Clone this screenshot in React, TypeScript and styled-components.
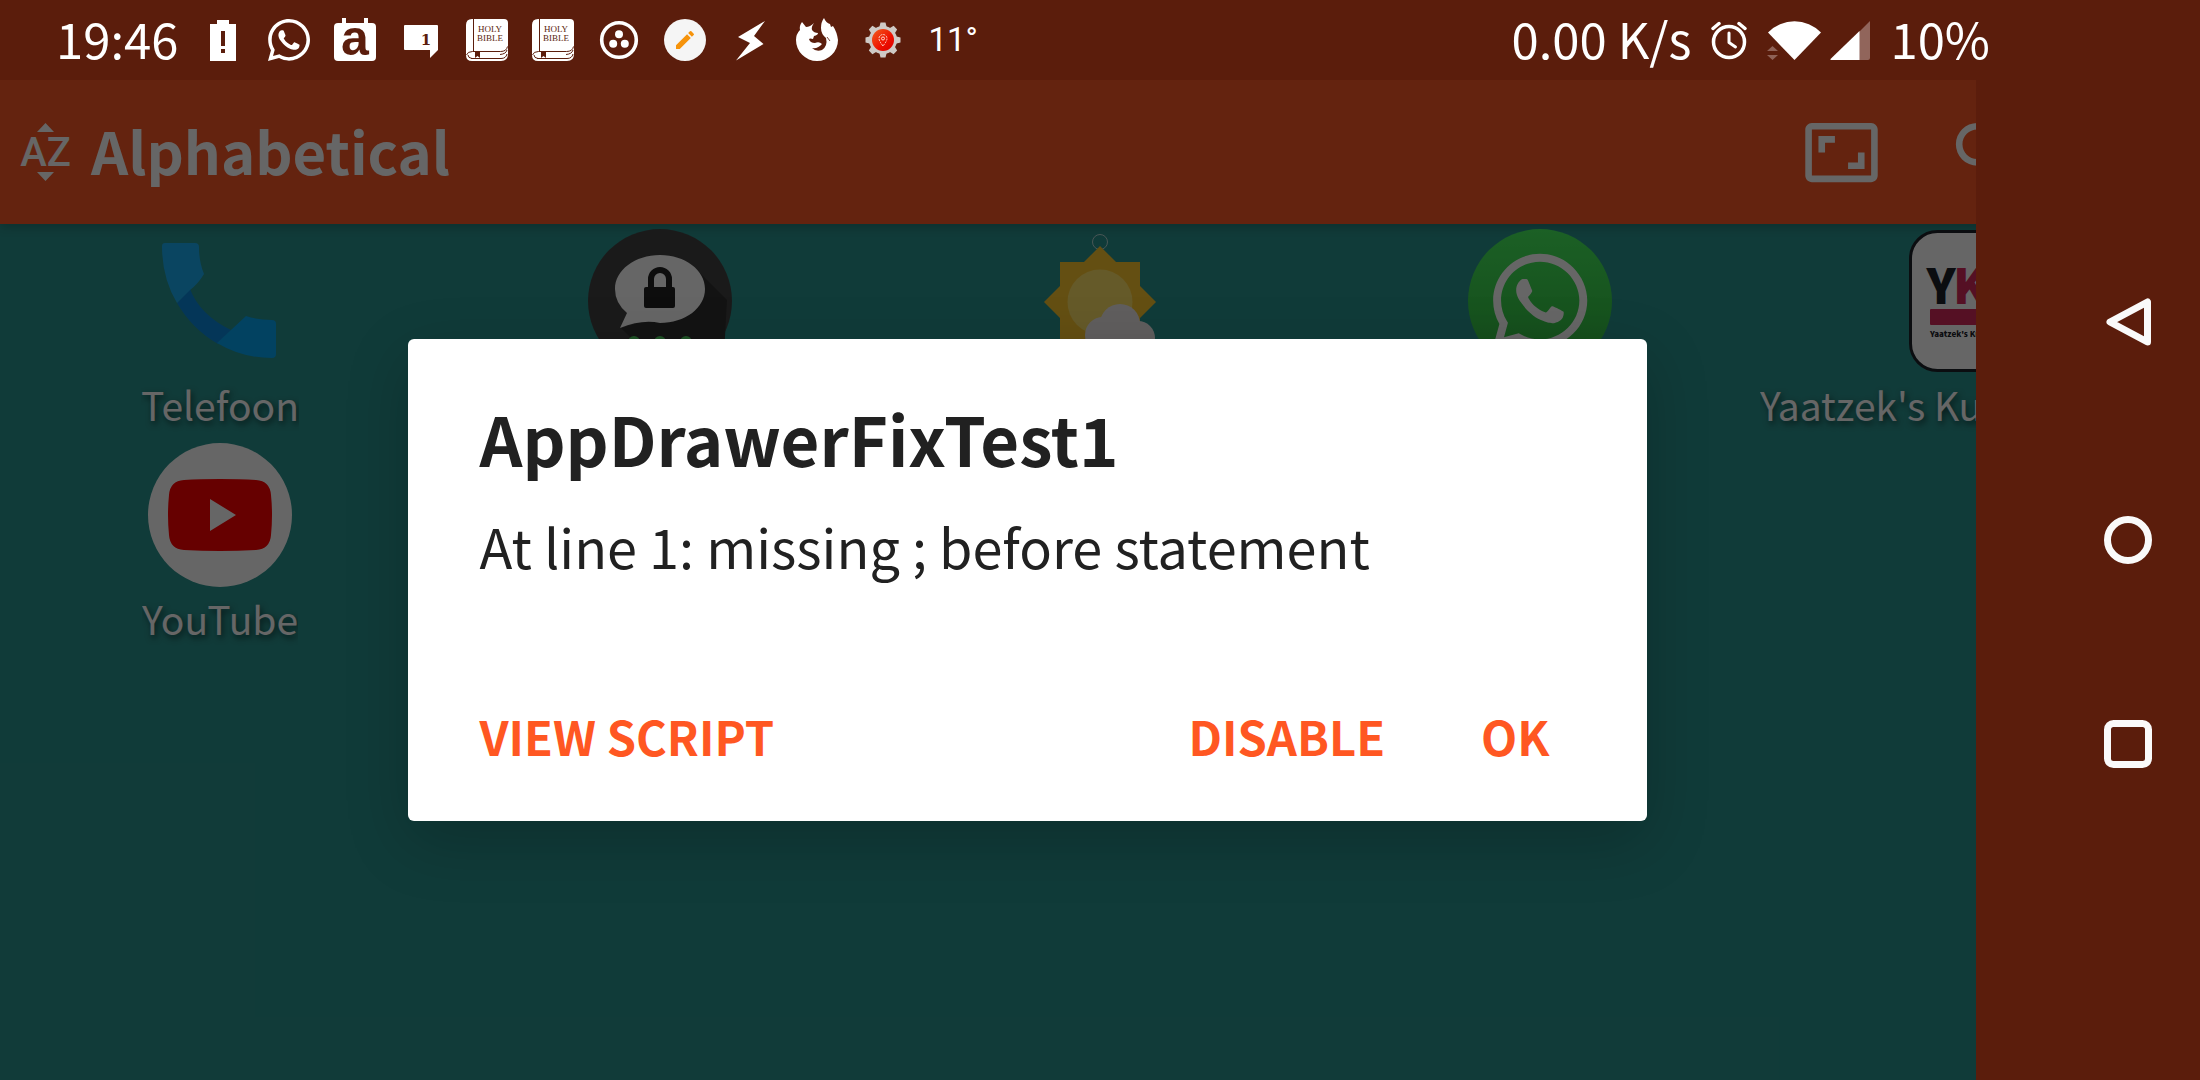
import React from "react";
import styled, { createGlobalStyle } from "styled-components";
import { FaWhatsapp } from "react-icons/fa";
import { MdAspectRatio, MdEdit, MdSearch } from "react-icons/md";

const sans = `"Noto Sans CJK JP", "Noto Sans", sans-serif`;
const frame = "#5b1d0c";

const GlobalStyle = createGlobalStyle`
  * { box-sizing: border-box; }
  body { margin: 0; background: ${frame}; font-family: ${sans}; overflow: hidden; }
  h1, h2, p { margin: 0; }
  button {
    margin: 0;
    padding: 0;
    border: 0;
    background: none;
    color: inherit;
    font: inherit;
    cursor: pointer;
  }
  svg { display: block; flex: none; }
`;

/* ---------- Layout ---------- */

const Screen = styled.div`
  display: grid;
  grid-template-rows: 80px 1fr;
  height: 100vh;
`;

const StatusBar = styled.header`
  display: flex;
  align-items: center;
  justify-content: space-between;
  padding: 0 210px 0 56px;
  background: ${frame};
  color: #fff;
`;

const StatusGroup = styled.div<{ $gap: number }>`
  display: flex;
  align-items: center;
  gap: ${(p) => p.$gap}px;
`;

const StatusText = styled.span`
  padding-bottom: 4px;
  font-size: 49px;
  line-height: 60px;
  white-space: nowrap;
`;

const Temperature = styled.span`
  font-family: Roboto, sans-serif;
  font-size: 33px;
  line-height: 40px;
`;

const StatusIcon = styled.svg.attrs({ viewBox: "0 0 42 42", "aria-hidden": true })`
  width: 42px;
  height: 42px;
  overflow: visible;
  fill: #fff;
`;

/* Launcher, scrim with dialog and navigation bar are layers in the same cell. */
const Stage = styled.div`
  display: grid;
  grid-template: minmax(0, 1fr) / minmax(0, 1fr);
  min-height: 0;
  overflow: hidden;
  > * { grid-area: 1 / 1; }
`;

const Launcher = styled.main`
  display: flex;
  flex-direction: column;
  background: #2a938e;
  color: #fff;
`;

const AppBar = styled.div`
  display: flex;
  align-items: center;
  gap: 21px;
  height: 144px;
  flex: none;
  padding: 0 175px 0 21px;
  background: #fb5926;
  box-shadow: 0 3px 10px rgba(0, 0, 0, 0.2);
`;

const BarTitle = styled.h1`
  flex: 1;
  padding-bottom: 4px;
  font-size: 58px;
  font-weight: 700;
  line-height: 70px;
`;

const BarActions = styled.div`
  display: flex;
  gap: 65px;
`;

const SortIcon = styled.svg`
  fill: #fff;
  overflow: visible;
  font-family: Roboto, sans-serif;
  font-size: 40px;
  font-weight: 500;
`;

const AppGrid = styled.div`
  display: grid;
  grid-template-columns: repeat(5, minmax(0, 1fr));
  row-gap: 8px;
  padding-top: 5px;
`;

const AppTile = styled.button`
  display: flex;
  flex-direction: column;
  align-items: center;
  justify-content: flex-start;
  min-width: 0;
`;

const AppIcon = styled.svg.attrs({ viewBox: "0 0 144 144", "aria-hidden": true })`
  width: 144px;
  height: 144px;
`;

const AppLabel = styled.span`
  max-width: 100%;
  overflow: hidden;
  font-size: 39px;
  line-height: 62px;
  white-space: nowrap;
  text-overflow: ellipsis;
  text-shadow: 2px 3px 6px rgba(0, 0, 0, 0.6);
`;

const Scrim = styled.div`
  display: flex;
  align-items: center;
  justify-content: center;
  padding-right: 146px;
  background: rgba(0, 0, 0, 0.6);
`;

const Dialog = styled.section`
  width: 100%;
  max-width: 1239px;
  padding: 59px 97px 55px 72px;
  border-radius: 6px;
  background: #fff;
  color: #212121;
  box-shadow: 0 20px 64px rgba(0, 0, 0, 0.2);
`;

const DialogTitle = styled.h2`
  font-size: 67px;
  font-weight: 700;
  line-height: 80px;
`;

const DialogMessage = styled.p`
  margin-top: 38px;
  font-size: 54px;
  line-height: 60px;
`;

const DialogActions = styled.div`
  display: flex;
  gap: 96px;
  margin-top: 130px;
`;

const DialogButton = styled.button<{ $lead?: boolean }>`
  margin-right: ${(p) => (p.$lead ? "auto" : "0")};
  color: #ff5722;
  font-size: 47px;
  font-weight: 700;
  line-height: 60px;
`;

const NavBar = styled.nav`
  display: grid;
  grid-template-rows: 232px 204px 204px;
  align-content: start;
  align-items: center;
  justify-content: end;
  justify-self: end;
  width: 224px;
  padding: 126px 48px 0 0;
  background: ${frame};
`;

const NavIcon = styled.svg.attrs({ viewBox: "0 0 48 48", "aria-hidden": true })`
  width: 48px;
  height: 48px;
  fill: none;
  stroke: #fafafa;
  stroke-width: 7;
  stroke-linejoin: round;
`;

/* ---------- Status icons ---------- */

const BatteryAlert = () => (
  <StatusIcon>
    <path d="M15 1h12v4h7v37H8V5h7z" />
    <path d="M19 12h4v15h-4zM19 30h4v4h-4z" fill={frame} />
  </StatusIcon>
);

const CalendarLetter = () => (
  <StatusIcon>
    <path d="M8-1h4v6H8zM30-1h4v6h-4z" />
    <rect y="4" width="42" height="38" rx="4" />
    <text x="21" y="36" textAnchor="middle" fontFamily="Liberation Sans, sans-serif" fontWeight="700" fontSize="50" fill={frame}>a</text>
  </StatusIcon>
);

const ChatCount = () => (
  <StatusIcon>
    <path d="M5 6h32q1 0 1 1v24l-8 8v-8H5q-1 0-1-1V7q0-1 1-1z" />
    <text x="26" y="26" textAnchor="middle" fontFamily="DejaVu Serif, serif" fontWeight="700" fontSize="15" fill={frame}>1</text>
  </StatusIcon>
);

const HolyBible = () => (
  <StatusIcon>
    <path d="M6 0h32q4 0 4 4v31q0 7-7 7H6q-6 0-6-6V6q0-6 6-6z" />
    <path d="M7.500 0v32M0.500 36q1-3.500 6-3.500h28q6 0 7-5M41 31q-1 4-7 4.500M5 39.500h30q5 0 6-4.500M2 36q0 3 4 3.500" fill="none" stroke={frame} strokeWidth="1" />
    <path d="M9 33h5v6l-2.500-2L9 39z" fill={frame} />
    <g fontFamily="Liberation Serif, serif" fontSize="9" fill={frame} textAnchor="middle">
      <text x="24" y="13">HOLY</text>
      <text x="24" y="22">BIBLE</text>
    </g>
  </StatusIcon>
);

const ThreeDots = () => (
  <StatusIcon>
    <circle cx="21" cy="21" r="17.300" fill="none" stroke="#fff" strokeWidth="3.600" />
    <circle cx="21" cy="15.300" r="4" />
    <circle cx="15.200" cy="24.800" r="4" />
    <circle cx="26.800" cy="24.800" r="4" />
  </StatusIcon>
);

const PencilDisc = () => (
  <StatusIcon>
    <circle cx="21" cy="21" r="21" fill="#f5f5f5" />
    <MdEdit x={9} y={9} size={24} color="#f6930b" />
  </StatusIcon>
);

const Bolt = () => (
  <StatusIcon>
    <path d="M35 2 8 18l12 6L6 41.500 33.500 25 24 17z" />
  </StatusIcon>
);

const Firefox = () => (
  <StatusIcon>
    <path d="M6 3l4 5q4 0 8-4-3 4-2 7 2 3 6 3 0 2-4 3l-1 3q-3-1-4 0 1 4 6 4 4-2 7 1-4 5-10 4 4 4 10 2 6-4 4-12-5-4-5-10 0-6 3-10 2 5 6 6l1 3 2-1q4 6 5 14A21 21 0 0 1 0 21q0-6 4-10-1-4 2-8z" />
    <path d="M31 18l3 4" stroke={frame} strokeWidth="0.800" />
  </StatusIcon>
);

const GearPin = () => (
  <StatusIcon>
    <defs>
      <linearGradient id="gear-disc" x1="0" y1="0" x2="1" y2="1">
        <stop offset="0" stopColor="#f2601f" />
        <stop offset="0.600" stopColor="#ee1000" />
        <stop offset="1" stopColor="#d80000" />
      </linearGradient>
    </defs>
    <g fill="#cfcac6">
      <circle cx="21" cy="21" r="14" />
      {[0, 45, 90, 135].map((angle) => (
        <path key={angle} d="M18.500 3.500h5l1.500 6v23l-1.500 6h-5l-1.500-6v-23z" transform={`rotate(${angle} 21 21)`} />
      ))}
    </g>
    <circle cx="21" cy="21" r="11" fill="url(#gear-disc)" />
    <path d="M21 27q-4-5-4-7.500a4 4 0 0 1 8 0Q25 22 21 27z" fill="none" stroke="#ffd9d0" strokeWidth="1" strokeDasharray="2 1" />
    <circle cx="21" cy="19.500" r="1.500" fill="none" stroke="#ffd9d0" />
  </StatusIcon>
);

const Alarm = () => (
  <svg width="36" height="39" viewBox="0 0 36 39" fill="none" stroke="#fff" strokeLinecap="round" strokeLinejoin="round" aria-hidden="true">
    <circle cx="18" cy="21" r="15.500" strokeWidth="3.500" />
    <path d="M2 7.500 8 2.500M34 7.500l-6-5" strokeWidth="3.500" />
    <path d="M18 12v9.500l6.500 4.500" strokeWidth="3" />
  </svg>
);

const Wifi = () => (
  <svg width="54" height="39" viewBox="0 0 54 39" aria-hidden="true">
    <path d="M1 11.500a37 37 0 0 1 53 0L27.500 39z" fill="#fff" />
    <path d="M0 30h11l-5.500-5zM0 34h11l-5.500 5z" fill="#8f6257" />
  </svg>
);

const Signal = () => (
  <svg width="40" height="39" viewBox="0 0 40 39" aria-hidden="true">
    <path d="M40 0v37q0 2-2 2h-9V11z" fill="#91655b" />
    <path d="M29.500 10v29H1q-1 0-.5-1z" fill="#fff" />
  </svg>
);

/* ---------- Launcher icons ---------- */

const PhoneIcon = () => (
  <AppIcon>
    <path d="M42 60q10 26 41 41l-13 14Q44 100 29 74z" fill="#0c88dc" />
    <path d="M17 14h30q4 0 4 4 0 15 5 27-6 10-14 16L29 74Q14 49 14 17q0-3 3-3z" fill="#1badf3" />
    <path d="M98 87q12 4 26 4 4 0 4 4v30q0 4-4 4-30 0-55-15z" fill="#06a5f2" />
  </AppIcon>
);

const ThreemaIcon = () => (
  <AppIcon>
    <circle cx="72" cy="72" r="72" fill="#434343" />
    <path d="M33 99l40-12 38-44 28 28-4 73H78z" fill="#303030" />
    <path d="M72 26c25 0 45 15 45 34S97 94 72 94q-18-4-40 5l7-15Q27 74 27 60c0-19 20-34 45-34z" fill="#fff" />
    <rect x="56" y="58" width="31" height="21" rx="2" fill="#222" />
    <path d="M63 60V50a9 9 0 0 1 18 0v10" fill="none" stroke="#222" strokeWidth="6" />
    <g fill="#4fd05f">
      <circle cx="46" cy="113" r="6" />
      <circle cx="72" cy="113" r="6" />
      <circle cx="98" cy="113" r="6" />
    </g>
  </AppIcon>
);

const WeatherIcon = () => (
  <AppIcon>
    <circle cx="72" cy="13" r="7.500" fill="none" stroke="#b5d6d4" strokeWidth="1" />
    <path d="M72 17l16 16h24v24l16 16-16 16v24H88l-16 16-16-16H32V89L16 73l16-16V33h24z" fill="#fbc62f" />
    <circle cx="72" cy="73" r="32.500" fill="#fde066" />
    <g fill="#efecec">
      <circle cx="92" cy="95" r="20" />
      <circle cx="75" cy="106" r="18" />
      <circle cx="110" cy="109" r="17" />
      <path d="M75 104h35v22H75z" />
    </g>
  </AppIcon>
);

const WhatsAppIcon = () => (
  <AppIcon>
    <defs>
      <linearGradient id="whatsapp-disc" x1="0" y1="0" x2="0" y2="1">
        <stop offset="0" stopColor="#46f05d" />
        <stop offset="1" stopColor="#30b840" />
      </linearGradient>
    </defs>
    <circle cx="72" cy="72" r="72" fill="url(#whatsapp-disc)" />
    <FaWhatsapp x={18} y={18} size={108} color="#fff" />
  </AppIcon>
);

const KustomIcon = () => (
  <AppIcon>
    <rect x="2.500" y="2.500" width="139" height="139" rx="27" fill="#fff" stroke="#1c2128" strokeWidth="3" />
    <g fontFamily="Noto Sans CJK JP, sans-serif" fontWeight="900">
      <text x="33" y="75" fontSize="48" textAnchor="middle" fill="#1c2128">Y</text>
      <text x="45" y="75" fontSize="48" fill="#d42a5a">K</text>
      <text x="22" y="108" fontSize="8" fill="#1c2128">Yaatzek's Kustom</text>
    </g>
    <rect x="22" y="80" width="100" height="16" rx="1" fill="#d42a5a" />
  </AppIcon>
);

const YouTubeIcon = () => (
  <AppIcon>
    <circle cx="72" cy="72" r="72" fill="#fff" />
    <path d="M72 36q20 0 36 1 14 1 15 15 2 20 0 40-1 14-15 15-36 2-72 0-14-1-15-15-2-20 0-40 1-14 15-15 16-1 36-1z" fill="#f00" />
    <path d="M62 56l26 16-26 16z" fill="#fff" />
  </AppIcon>
);

const apps = [
  { id: "phone", name: "Telefoon", Icon: PhoneIcon },
  { id: "threema", Icon: ThreemaIcon },
  { id: "weather", Icon: WeatherIcon },
  { id: "whatsapp", Icon: WhatsAppIcon },
  { id: "kustom", name: "Yaatzek's Kustom Komponents", Icon: KustomIcon },
  { id: "youtube", name: "YouTube", Icon: YouTubeIcon },
];

export default function App() {
  return (
    <>
      <GlobalStyle />
      <Screen>
        <StatusBar>
          <StatusGroup $gap={24}>
            <StatusText>19:46</StatusText>
            <BatteryAlert />
            <StatusIcon>
              <FaWhatsapp x={-3} y={-3} size={48} />
            </StatusIcon>
            <CalendarLetter />
            <ChatCount />
            <HolyBible />
            <HolyBible />
            <ThreeDots />
            <PencilDisc />
            <Bolt />
            <Firefox />
            <GearPin />
            <Temperature>11°</Temperature>
          </StatusGroup>
          <StatusGroup $gap={20}>
            <StatusText>0.00 K/s</StatusText>
            <Alarm />
            <StatusGroup $gap={9}>
              <Wifi />
              <Signal />
            </StatusGroup>
            <StatusText>10%</StatusText>
          </StatusGroup>
        </StatusBar>

        <Stage>
          <Launcher>
            <AppBar>
              <SortIcon width="49" height="58" viewBox="0 0 49 58" aria-hidden="true">
                <path d="M16 9h17l-8.500-9zM16 49h17l-8.500 9z" />
                <text x="24.500" y="43" textAnchor="middle">AZ</text>
              </SortIcon>
              <BarTitle>Alphabetical</BarTitle>
              <BarActions>
                <button aria-label="Resize">
                  <MdAspectRatio size={79} />
                </button>
                <button aria-label="Search">
                  <MdSearch size={79} />
                </button>
              </BarActions>
            </AppBar>
            <AppGrid>
              {apps.map(({ id, name, Icon }) => (
                <AppTile key={id} aria-label={name ?? id}>
                  <Icon />
                  {name && <AppLabel>{name}</AppLabel>}
                </AppTile>
              ))}
            </AppGrid>
          </Launcher>

          <Scrim>
            <Dialog role="alertdialog" aria-labelledby="dialog-title" aria-describedby="dialog-message">
              <DialogTitle id="dialog-title">AppDrawerFixTest1</DialogTitle>
              <DialogMessage id="dialog-message">At line 1: missing ; before statement</DialogMessage>
              <DialogActions>
                <DialogButton $lead>VIEW SCRIPT</DialogButton>
                <DialogButton>DISABLE</DialogButton>
                <DialogButton>OK</DialogButton>
              </DialogActions>
            </Dialog>
          </Scrim>

          <NavBar aria-label="System navigation">
            <button aria-label="Back">
              <NavIcon>
                <path d="M43.500 4v40L6 24z" />
              </NavIcon>
            </button>
            <button aria-label="Home">
              <NavIcon>
                <circle cx="24" cy="24" r="20.500" />
              </NavIcon>
            </button>
            <button aria-label="Recent apps">
              <NavIcon>
                <rect x="3.500" y="3.500" width="41" height="41" rx="6" />
              </NavIcon>
            </button>
          </NavBar>
        </Stage>
      </Screen>
    </>
  );
}
